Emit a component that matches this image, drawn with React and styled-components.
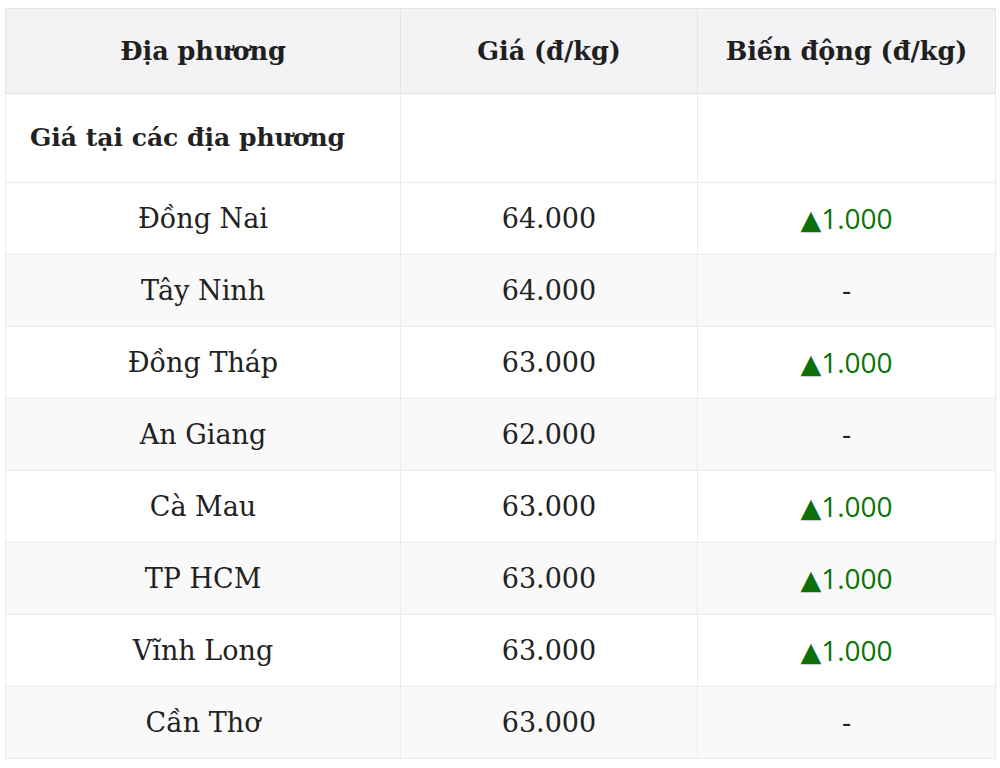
import React from 'react';
import styled, { createGlobalStyle } from 'styled-components';

const GlobalStyle = createGlobalStyle`
  body {
    margin: 0;
    background: #ffffff;
    font-family: "DejaVu Serif", "Liberation Serif", serif;
    color: #222222;
  }
`;

const Page = styled.div`
  padding: 8px 5px;
`;

const Table = styled.table`
  width: 990px;
  border-collapse: collapse;
  table-layout: fixed;
  border: 1px solid #e4e3e6;
`;

const HeadCell = styled.th`
  background: #f3f2f5;
  font-weight: 700;
  font-size: 25.5px;
  line-height: 40px;
  height: 84px;
  padding: 0 10px;
  text-align: center;
  border: 1px solid #e4e3e6;
  color: #1f1f1f;
`;

const Row = styled.tr`
  background: ${p => (p.$striped ? '#f9f9fa' : '#ffffff')};
`;

const Cell = styled.td`
  font-size: ${p => (p.$section ? '25px' : '27px')};
  line-height: 40px;
  height: ${p => (p.$section ? '89px' : '72px')};
  padding: ${p => (p.$section ? '0 24px' : '0 10px')};
  text-align: ${p => (p.$section ? 'left' : 'center')};
  font-weight: ${p => (p.$section ? 700 : 400)};
  border: 1px solid #ebeaed;
  color: #222222;
  box-sizing: border-box;
`;

const Change = styled.span`
  color: #0b700b;
  font-family: "Open Sans", "Noto Sans", sans-serif;
  font-size: 28px;
`;

const Arrow = styled.span`
  font-family: "DejaVu Sans", sans-serif;
  font-size: 27px;
`;

const rows = [
  { name: 'Đồng Nai', price: '64.000', change: '1.000' },
  { name: 'Tây Ninh', price: '64.000', change: null },
  { name: 'Đồng Tháp', price: '63.000', change: '1.000' },
  { name: 'An Giang', price: '62.000', change: null },
  { name: 'Cà Mau', price: '63.000', change: '1.000' },
  { name: 'TP HCM', price: '63.000', change: '1.000' },
  { name: 'Vĩnh Long', price: '63.000', change: '1.000' },
  { name: 'Cần Thơ', price: '63.000', change: null },
];

export default function App() {
  return (
    <Page>
      <GlobalStyle />
      <Table>
        <colgroup>
          <col style={{ width: 395 }} />
          <col style={{ width: 297 }} />
          <col style={{ width: 298 }} />
        </colgroup>
        <thead>
          <tr>
            <HeadCell>Địa phương</HeadCell>
            <HeadCell>Giá (đ/kg)</HeadCell>
            <HeadCell>Biến động (đ/kg)</HeadCell>
          </tr>
        </thead>
        <tbody>
          <Row>
            <Cell $section>Giá tại các địa phương</Cell>
            <Cell />
            <Cell />
          </Row>
          {rows.map((r, i) => (
            <Row key={r.name} $striped={i % 2 === 1}>
              <Cell>{r.name}</Cell>
              <Cell>{r.price}</Cell>
              <Cell>
                {r.change ? (
                  <Change>
                    <Arrow>▲</Arrow>
                    {r.change}
                  </Change>
                ) : '-'}
              </Cell>
            </Row>
          ))}
        </tbody>
      </Table>
    </Page>
  );
}
